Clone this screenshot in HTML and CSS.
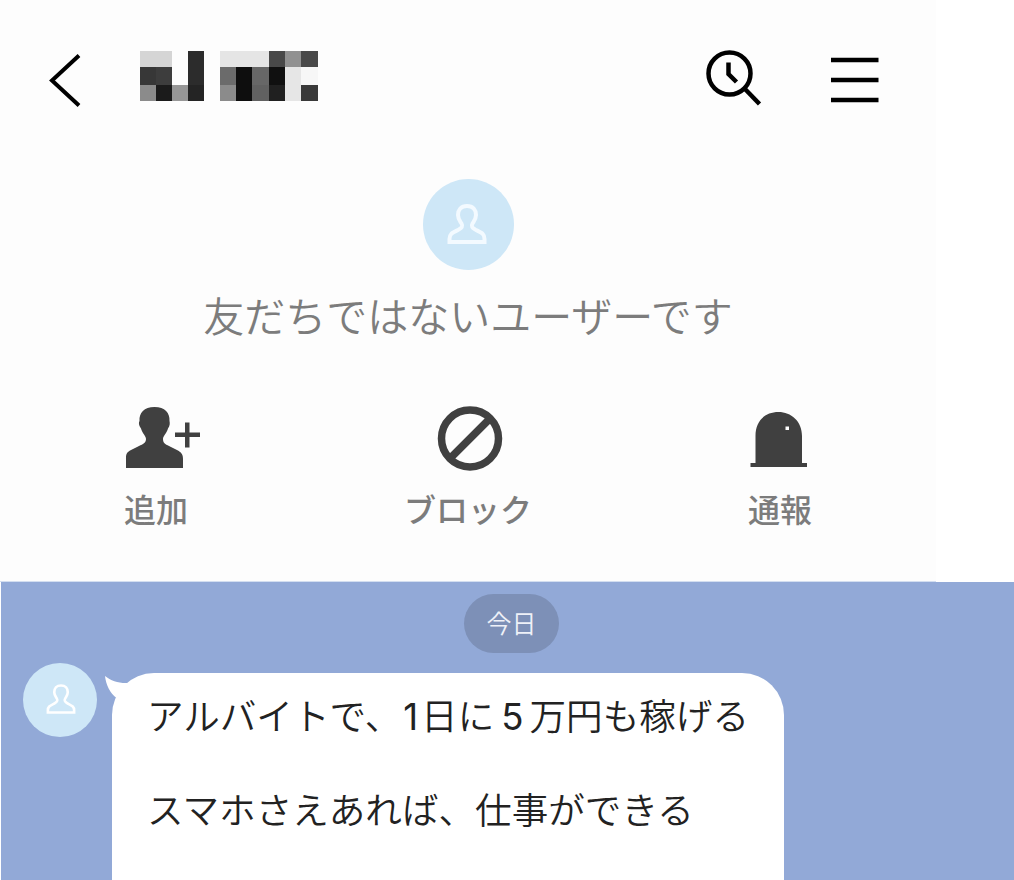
FILE: index.html
```html
<!DOCTYPE html>
<html lang="ja">
  <head>
    <meta charset="UTF-8" />
    <meta name="viewport" content="width=device-width, initial-scale=1.0" />
    <title>トーク</title>
    <link rel="stylesheet" href="styles.css">
  </head>
  <body>
    <div class="top">
      <!-- Header -->
      <div class="header">
        <svg class="back" width="34" height="56" viewBox="0 0 34 56">
          <path d="M32 3.500 L5 28.500 L32 53.500" fill="none" stroke="#000" stroke-width="4" />
        </svg>
        <!-- Masked user name -->
        <svg class="name" width="179" height="50" viewBox="0 0 179 50">
          <path fill="#d5d5d5" d="M0 0h32v16H0z" />
          <path fill="#2c2c2c" d="M48 0h16v34H48z" />
          <path fill="#373737" d="M0 16h16v18H0z" />
          <path fill="#3d3d3d" d="M16 16h16v18H16z" />
          <path fill="#8b8b8b" d="M0 34h16v16H0z" />
          <path fill="#1b1b1b" d="M16 34h16v16H16z" />
          <path fill="#979797" d="M32 34h16v16H32z" />
          <path fill="#242424" d="M48 34h16v16H48z" />
          <path fill="#e5e5e5" d="M80 0h49v16H80z" />
          <path fill="#494949" d="M129 0h16v16h-16z" />
          <path fill="#919191" d="M145 0h16v16h-16z" />
          <path fill="#494949" d="M161 0h17v16h-17z" />
          <path fill="#6b6b6b" d="M80 16h16v18H80z" />
          <path fill="#0e0e0e" d="M96 16h16v34H96z" />
          <path fill="#676767" d="M112 16h17v18h-17z" />
          <path fill="#101010" d="M129 16h16v18h-16z" />
          <path fill="#e6e6e6" d="M145 16h16v34h-16z" />
          <path fill="#f7f7f7" d="M161 16h17v18h-17z" />
          <path fill="#8b8b8b" d="M80 34h16v16H80z" />
          <path fill="#616161" d="M112 34h17v16h-17z" />
          <path fill="#202020" d="M129 34h16v16h-16z" />
          <path fill="#393939" d="M161 34h17v16h-17z" />
        </svg>
        <svg class="search" width="58" height="58" viewBox="0 0 58 58" fill="none" stroke="#000" stroke-width="4.500">
          <circle cx="24.500" cy="24.500" r="21" />
          <path d="M39.500 39.500 L54.500 55" />
          <path d="M23.500 13.500 V25 L31.500 33" />
        </svg>
        <svg class="menu" width="48" height="46" viewBox="0 0 48 46">
          <path d="M0 3h47.500M0 23h47.500M0 43h47.500" stroke="#000" stroke-width="4.500" />
        </svg>
      </div>
      <!-- User notice -->
      <div class="notice">
        <div class="avatar">
          <svg width="40" height="42" viewBox="0 0 40 42">
            <path d="M20 3 C14 3 11 7 11 12 C11 16 13 18 14.500 20.500 C16.500 24 14 25 11 27 C5 30 2.500 31 2.500 36 V39 H37.500 V36 C37.500 31 35 30 29 27 C26 25 23.500 24 25.500 20.500 C27 18 29 16 29 12 C29 7 26 3 20 3 Z" />
          </svg>
        </div>
        <p>友だちではないユーザーです</p>
      </div>
      <!-- Actions -->
      <div class="actions">
        <div class="action action-add">
          <svg width="78" height="66" viewBox="0 0 78 66" fill="#404040">
            <path d="M30.500 2 C20 2 15 8 15.500 16 C14 19 16 22 17 23.500 C18 28 22 31 22 34 C22 38 19 39 15 41 L6 45.500 C2 48 2 50 2 54 V63 H59 V54 C59 50 58 48 54 45.500 L45 41 C41 39 39 38 39 34 C39 31 43 28 44 23.500 C46 21 46 18 45.500 16 C46 8 41 2 30.500 2 Z" />
            <path d="M61 17.500h4.500v10h10.500v4.500h-10.500v10.500h-4.500v-10.500h-10v-4.500h10z" />
          </svg>
          <span>追加</span>
        </div>
        <div class="action action-block">
          <svg width="66" height="66" viewBox="0 0 66 66" fill="none" stroke="#404040" stroke-width="7.500">
            <circle cx="33" cy="33.500" r="28.500" />
            <path d="M13 53.500 L53 13.500" />
          </svg>
          <span>ブロック</span>
        </div>
        <div class="action action-report">
          <svg width="60" height="66" viewBox="0 0 60 66">
            <path d="M2.500 62 V58 H7.500 V31 C7.500 16 17 7 30.500 7 C43 7 54 16 54 31 V58 H59 V62 Z" fill="#404040" />
            <path d="M37.500 21.500h3.500v3.500h-3.500z" fill="#fff" />
          </svg>
          <span>通報</span>
        </div>
      </div>
    </div>
    <!-- Talk -->
    <div class="talk">
      <div class="date">今日</div>
      <div class="message">
        <div class="avatar avatar-small">
          <svg width="30" height="32" viewBox="0 0 40 42">
            <path d="M20 3 C14 3 11 7 11 12 C11 16 13 18 14.500 20.500 C16.500 24 14 25 11 27 C5 30 2.500 31 2.500 36 V39 H37.500 V36 C37.500 31 35 30 29 27 C26 25 23.500 24 25.500 20.500 C27 18 29 16 29 12 C29 7 26 3 20 3 Z" />
          </svg>
        </div>
        <div class="bubble">
          <svg class="tail" width="40" height="40" viewBox="0 0 40 40">
            <path d="M0 0 C6 5 14 7.500 23 7 L38 10 L9 38 C9 30 10 26 11.500 22 C5 17 1 9 0 0 Z" fill="#fff" />
          </svg>
          <p>アルバイトで、<span class="num">1</span>日に<span class="num num-wide">5</span>万円も稼げる</p>
          <p>スマホさえあれば、仕事ができる</p>
        </div>
      </div>
    </div>
  </body>
</html>
```
FILE: styles.css
```css
* {
  margin: 0;
  padding: 0;
  box-sizing: border-box;
}
body {
  height: 880px;
  background-color: #fff;
  font-family: "Noto Sans CJK JP", sans-serif;
}
svg {
  display: block;
  flex-shrink: 0;
}
.top {
  width: 936px;
  height: 582px;
  background-color: #fdfdfd;
  border-bottom: 1px solid #d3def0;
}
/* Header */
.header {
  display: flex;
  align-items: flex-start;
  height: 178px;
  padding: 51px 57px 0 47px;
}
.back {
  margin-top: 1px;
}
.name {
  margin-left: 59px;
  shape-rendering: crispEdges;
}
.search {
  margin: -2px 0 0 auto;
}
.menu {
  margin: 6px 0 0 68px;
}
/* User notice */
.notice {
  display: flex;
  flex-direction: column;
  align-items: center;
  height: 226px;
}
.notice p {
  margin-top: 14px;
  color: #7c7c7c;
  font-size: 41px;
  font-weight: 350;
  line-height: 60px;
  white-space: nowrap;
}
.avatar {
  display: flex;
  align-items: center;
  justify-content: center;
  flex-shrink: 0;
  width: 91px;
  height: 91px;
  margin-top: 1px;
  border-radius: 50%;
  background-color: #cee7f7;
}
.avatar svg {
  margin: -2px 2px 0 0;
}
.avatar path {
  fill: none;
  stroke: #f3faff;
  stroke-width: 4;
}
/* Actions */
.actions {
  display: flex;
  padding: 1px 0 0 124px;
}
.action {
  display: flex;
  flex-direction: column;
  color: #7c7c7c;
  font-size: 32px;
  font-weight: 500;
  line-height: 46px;
}
.action span {
  margin-top: 14px;
}
.action-block {
  align-items: center;
  margin-left: 202px;
}
.action-block svg {
  margin-left: 4px;
}
.action-report {
  margin-left: 216px;
}
/* Talk */
.talk {
  height: 298px;
  margin-left: 1px;
  padding-top: 12px;
  background-color: #92a9d7;
}
.date {
  width: 95px;
  height: 59px;
  margin-left: 463px;
  border-radius: 30px;
  background-color: #7d90b7;
  color: #eef1f8;
  font-size: 25px;
  font-weight: 350;
  line-height: 57px;
  text-align: center;
}
.message {
  display: flex;
  align-items: flex-start;
  padding: 9px 0 0 22px;
}
.avatar-small {
  width: 74px;
  height: 74px;
}
.avatar-small svg {
  margin: -2px 0 0 1px;
}
.avatar-small path {
  stroke: #fff;
  stroke-width: 3.5;
}
.bubble {
  position: relative;
  width: 672px;
  height: 207px;
  margin: 11px 0 0 15px;
  padding: 15px 0 0 35px;
  border-radius: 42px 42px 0 0;
  background-color: #fff;
}
.bubble p {
  height: 94px;
  color: #222;
  font-size: 36.6px;
  font-weight: 350;
  line-height: 53px;
  white-space: nowrap;
}
.tail {
  position: absolute;
  top: 3px;
  left: -7px;
}
.num {
  margin: 0 3px 0 2px;
  font-family: Inter, "Liberation Sans", sans-serif;
  font-weight: 400;
}
.num-wide {
  margin: 0 6px 0 7px;
}
```
